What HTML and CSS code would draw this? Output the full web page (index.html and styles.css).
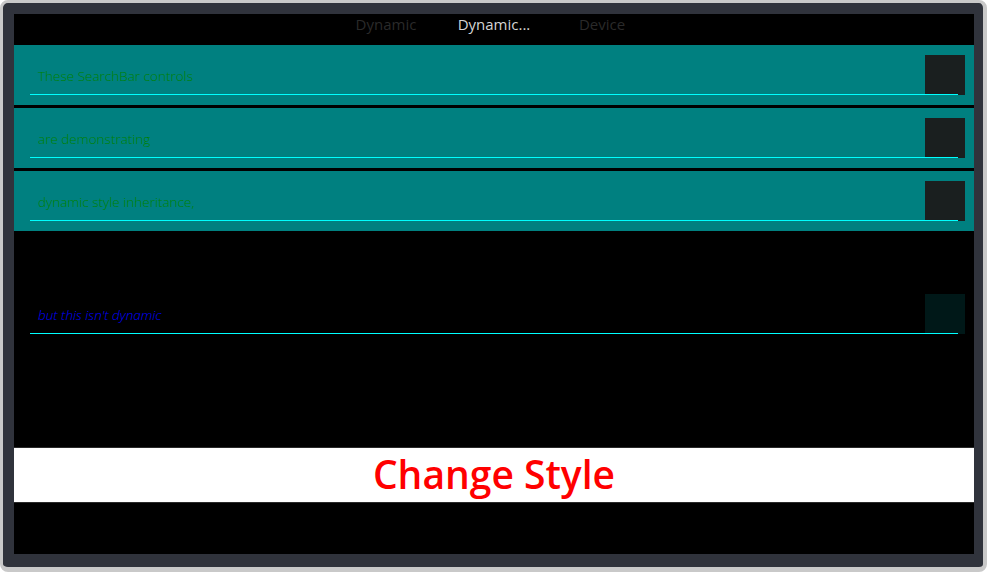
FILE: index.html
```html
<!DOCTYPE html>
<html lang="en">
<head>
<meta charset="utf-8">
<title>SearchBar styles</title>
<link rel="stylesheet" href="styles.css">
</head>
<body>
<div class="window">
  <div class="frame">
    <div class="content">
      <div class="tabs">
        <span class="tab">Dynamic</span>
        <span class="tab tab-active">Dynamic...</span>
        <span class="tab">Device</span>
      </div>
      <div class="rows">
        <div class="row row-dyn">
          <div class="field"><span class="field-text">These SearchBar controls</span></div>
          <div class="search-btn"></div>
        </div>
        <div class="row row-dyn">
          <div class="field"><span class="field-text">are demonstrating</span></div>
          <div class="search-btn"></div>
        </div>
        <div class="row row-dyn">
          <div class="field"><span class="field-text">dynamic style inheritance,</span></div>
          <div class="search-btn"></div>
        </div>
      </div>
      <div class="row row-static">
        <div class="field"><span class="field-text field-italic">but this isn't dynamic</span></div>
        <div class="search-btn search-btn-static"></div>
      </div>
      <div class="button">Change Style</div>
    </div>
  </div>
</div>
</body>
</html>
```

FILE: styles.css
```css
html, body {
  margin: 0;
  padding: 0;
  background: #ffffff;
}

.window {
  width: 987px;
  height: 572px;
  box-sizing: border-box;
  border-style: solid;
  border-color: #c9c9c9;
  border-width: 3px 4px 5px 3px;
  border-radius: 8px;
  background: #30333c;
  overflow: hidden;
}

.frame {
  padding: 11px 9px 13px 11px;
}

.content {
  width: 960px;
  height: 540px;
  background: #000000;
  display: flex;
  flex-direction: column;
  font-family: "Open Sans", "Noto Sans", sans-serif;
}

.tabs {
  height: 31px;
  display: flex;
  justify-content: center;
  align-items: flex-start;
  box-sizing: border-box;
  padding-top: 0;
}

.tab {
  width: 108px;
  text-align: center;
  font-size: 15px;
  line-height: 20px;
  color: #2a2a2a;
}

.tab-active {
  color: #d4d4d4;
}

.rows {
  display: flex;
  flex-direction: column;
  gap: 3px;
}

.row {
  position: relative;
  height: 60px;
}

.row-dyn {
  background: #008080;
}

.row-static {
  margin-top: 53px;
  background: #000000;
}

.field {
  position: relative;
  z-index: 1;
  margin-left: 16px;
  width: 928px;
  height: 50px;
  box-sizing: border-box;
  border-bottom: 1px solid #00ffff;
  padding: 19px 0 0 8px;
}

.field-text {
  font-size: 13.5px;
  line-height: 20px;
  font-weight: 300;
  color: #008000;
}

.field-italic {
  font-style: italic;
  color: #0000ff;
}

.search-btn {
  position: absolute;
  top: 10px;
  right: 9px;
  width: 40px;
  height: 40px;
  background: #1a1f1f;
}

.search-btn-static {
  background: #001818;
}

.button {
  margin-top: 103px;
  height: 56px;
  box-sizing: border-box;
  background: #ffffff;
  border-top: 1px solid #2a2a2a;
  border-bottom: 1px solid #2a2a2a;
  display: flex;
  align-items: center;
  justify-content: center;
  color: #ff0000;
  font-size: 39px;
  font-weight: 600;
  line-height: 44px;
  padding-bottom: 2px;
}
```
